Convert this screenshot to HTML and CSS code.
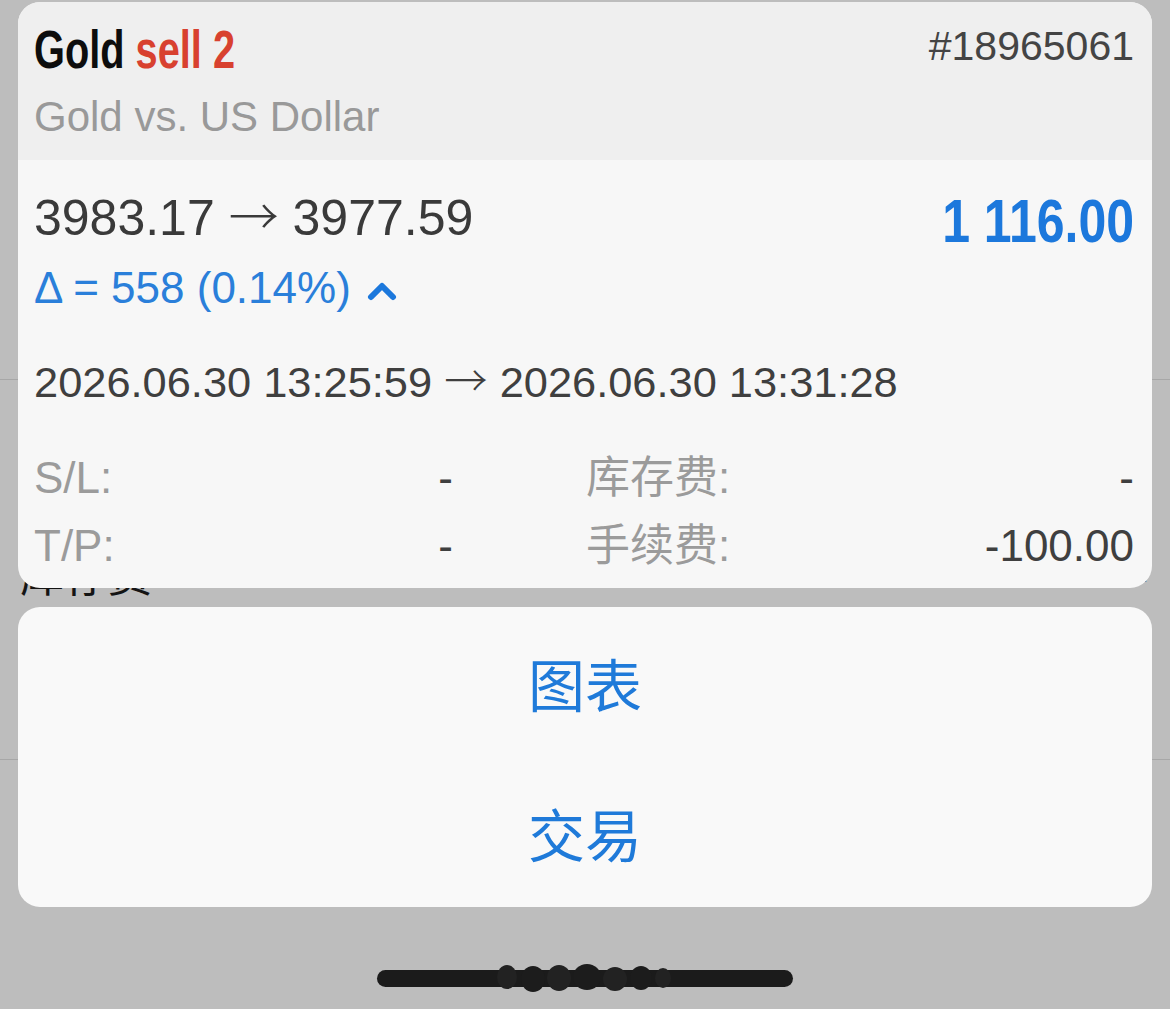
FILE: index.html
```html
<!DOCTYPE html>
<html lang="zh">
<head>
<meta charset="utf-8">
<title>Gold sell 2</title>
<link rel="stylesheet" href="styles.css">
</head>
<body>
<div class="backdrop">
  <div class="bd-row bd-row-a">
    <div class="bd-line bd-top"><span>Gold Pro</span><span>Gold vs US Dollar 100.000</span></div>
  </div>
  <div class="bd-row bd-row-b">
    <div class="bd-line bd-mid"><span>库存费</span><span>-</span></div>
  </div>
  <div class="bd-row bd-row-c"></div>
</div>

<div class="sheet">
  <section class="card info">
    <header class="info-head">
      <div class="head-left">
        <div class="title"><span class="title-text">Gold <span class="sell">sell 2</span></span></div>
        <div class="subtitle">Gold vs. US Dollar</div>
      </div>
      <div class="ticket">#18965061</div>
    </header>
    <div class="info-body">
      <div class="price-row">
        <div class="prices">3983.17 <span class="arrow">→</span> 3977.59</div>
        <div class="profit"><span class="profit-text">1 116.00</span></div>
      </div>
      <div class="delta">Δ = 558 (0.14%)<svg class="chev" width="30" height="22" viewBox="0 0 30 22"><polyline points="4,18 15,7 26,18" fill="none" stroke="#1c78dc" stroke-width="6" stroke-linecap="round" stroke-linejoin="round"/></svg></div>
      <div class="dates">2026.06.30 13:25:59 <span class="arrow">→</span> 2026.06.30 13:31:28</div>
      <div class="fields">
        <div class="field"><span class="lbl">S/L:</span><span class="val">-</span></div>
        <div class="field"><span class="lbl">库存费:</span><span class="val">-</span></div>
        <div class="field"><span class="lbl">T/P:</span><span class="val">-</span></div>
        <div class="field"><span class="lbl">手续费:</span><span class="val">-100.00</span></div>
      </div>
    </div>
  </section>

  <section class="card actions">
    <div class="action">图表</div>
    <div class="action">交易</div>
  </section>

  <div class="home">
    <svg width="420" height="44" viewBox="0 0 420 44">
      <rect x="2" y="13" width="416" height="17" rx="8.5" fill="#1b1b1b"/>
      <ellipse cx="132" cy="20" rx="10" ry="12" fill="#222"/>
      <ellipse cx="158" cy="22" rx="12" ry="13" fill="#1c1c1c"/>
      <ellipse cx="184" cy="21" rx="12" ry="13" fill="#222"/>
      <ellipse cx="212" cy="20" rx="14" ry="13" fill="#1c1c1c"/>
      <ellipse cx="240" cy="22" rx="12" ry="12" fill="#222"/>
      <ellipse cx="266" cy="21" rx="11" ry="12" fill="#1c1c1c"/>
      <ellipse cx="288" cy="21" rx="8" ry="10" fill="#222"/>
    </svg>
  </div>
</div>
</body>
</html>
```

FILE: styles.css
```css
* { box-sizing: border-box; }

html, body {
  margin: 0;
  padding: 0;
}

body {
  width: 1170px;
  height: 1009px;
  overflow: hidden;
  position: relative;
  background: #bdbdbd;
  font-family: "Liberation Sans", "Noto Sans CJK SC", sans-serif;
}

/* dimmed page behind the sheet */
.backdrop {
  display: flex;
  flex-direction: column;
}

.bd-row {
  border-bottom: 1px solid #a7a7a7;
}

.bd-row-a { height: 380px; }
.bd-row-b { height: 380px; }
.bd-row-c { height: 249px; border-bottom: none; }

.bd-line {
  display: flex;
  justify-content: space-between;
  color: #141414;
  font-size: 44px;
  line-height: 50px;
}

.bd-top {
  margin-top: -41px;
  padding: 0 22px 0 62px;
}

.bd-mid {
  margin-top: 172px;
  padding: 0 22px 0 20px;
}

/* overlay sheet */
.sheet {
  position: absolute;
  top: 2px;
  left: 18px;
  width: 1134px;
  display: flex;
  flex-direction: column;
}

.card {
  border-radius: 22px;
  overflow: hidden;
}

.info {
  height: 586px;
  background: #f7f7f7;
}

.info-head {
  height: 158px;
  background: #efefef;
  display: flex;
  justify-content: space-between;
  align-items: flex-start;
  padding: 18px 18px 0 16px;
}

.title {
  font-weight: bold;
  font-size: 53px;
  line-height: 60px;
  color: #0d0d0d;
  white-space: nowrap;
}

.title-text {
  display: inline-block;
  transform: scaleX(0.75);
  transform-origin: left center;
}

.sell { color: #d8412f; }

.subtitle {
  margin-top: 12px;
  font-size: 42px;
  line-height: 50px;
  color: #999999;
}

.ticket {
  font-size: 41px;
  line-height: 52px;
  color: #444444;
}

.info-body {
  padding: 28px 18px 0 16px;
  color: #3d3d3d;
}

.price-row {
  display: flex;
  justify-content: space-between;
  align-items: flex-start;
}

.prices {
  font-size: 50px;
  line-height: 60px;
  color: #3a3a3a;
}

.arrow {
  font-family: "Noto Sans CJK SC", sans-serif;
  font-weight: 300;
  line-height: 1;
}

.profit {
  margin-top: 3px;
  font-weight: bold;
  font-size: 61px;
  line-height: 60px;
  color: #1c78dc;
  white-space: nowrap;
}

.profit-text {
  display: inline-block;
  transform: scaleX(0.82);
  transform-origin: right center;
}

.delta {
  margin-top: 12px;
  font-size: 44px;
  line-height: 50px;
  color: #2a7fda;
  display: flex;
  align-items: center;
}

.chev {
  margin-left: 16px;
  margin-top: 4px;
}

.dates {
  margin-top: 44px;
  font-size: 43.4px;
  line-height: 50px;
  color: #3f3f3f;
}

.fields {
  margin-top: 46px;
  display: grid;
  grid-template-columns: 419px 548px;
  column-gap: 133px;
  row-gap: 18px;
}

.field {
  display: flex;
  justify-content: space-between;
  font-size: 44px;
  line-height: 50px;
}

.lbl { color: #9b9b9b; }
.val { color: #3f3f3f; }

.actions {
  margin-top: 19px;
  height: 300px;
  background: #f9f9f9;
  display: flex;
  flex-direction: column;
}

.action {
  height: 150px;
  display: flex;
  align-items: center;
  justify-content: center;
  font-family: "Noto Sans CJK SC", sans-serif;
  font-size: 57px;
  color: #1f7ad9;
}

.home {
  margin-top: 50px;
  display: flex;
  justify-content: center;
}
```
